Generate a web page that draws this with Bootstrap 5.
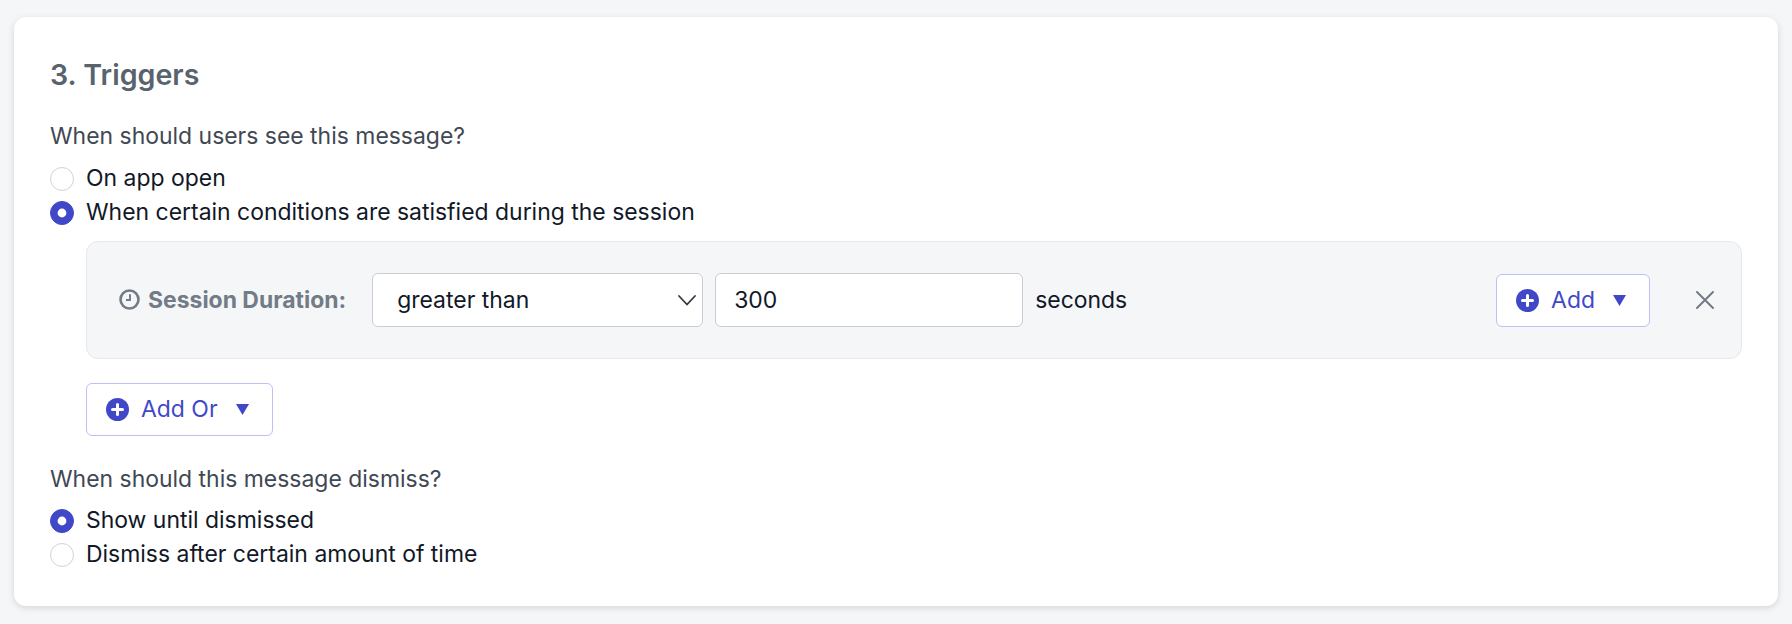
<!DOCTYPE html>
<html lang="en">
<head>
<meta charset="utf-8">
<title>Triggers</title>
<link href="https://cdn.jsdelivr.net/npm/bootstrap@5.3.0/dist/css/bootstrap.min.css" rel="stylesheet">
<style>
body{background:#f5f6f8;font-family:Inter,"Liberation Sans",sans-serif;font-size:22.95px;color:#111827;}
.page-pad{padding:17px 14px 18px;}
.trig-card{height:589px;border:0;border-radius:12px;box-shadow:0 2px 6px rgba(40,50,70,.16);padding:40px 36px 0;}
.trig-title{font-size:28.6px;font-weight:600;color:#59636e;line-height:36px;margin:0 0 30px;}
.q-label{color:#3f4853;line-height:27px;margin:0 0 15px;}
.q-label-second{margin-bottom:14px;}
.opt{min-height:0;padding-left:36px;margin:0 0 7px;line-height:27px;}
.opt .form-check-input{width:24px;height:24px;margin-left:-36px;margin-top:2px;border-color:#cfd2d8;}
.opt .form-check-input:checked{background-color:#4148c8;border-color:#4148c8;background-image:url("data:image/svg+xml,%3csvg xmlns='http://www.w3.org/2000/svg' viewBox='-4 -4 8 8'%3e%3ccircle r='1.6' fill='%23fff'/%3e%3c/svg%3e");}
.cond-panel{margin:8px 0 24px 36px;height:118px;background:#f5f6f8;border:1px solid #e6e8ec;border-radius:12px;padding:0 33px 0 32px;}
.cond-name{font-weight:700;color:#727c86;margin-right:26px;gap:8px;}
.cond-select,.cond-input{height:54px;font-size:22.95px;color:#111827;border-color:#c9cdd3;border-radius:6px;}
.cond-select{width:331px;padding-left:24px;background-image:url("data:image/svg+xml,%3csvg xmlns='http://www.w3.org/2000/svg' viewBox='0 0 18 11'%3e%3cpath fill='none' stroke='%23343a40' stroke-width='1.8' stroke-linecap='round' d='M1 1l8 8.500 8-8.500'/%3e%3c/svg%3e");background-size:18px 11px;background-position:right 6px center;}
.cond-input{width:308px;margin-left:12px;padding-left:18px;}
.cond-unit{margin-left:12px;}
.add-btn{height:53px;display:inline-flex;align-items:center;background:#fff;border:1px solid #bcc0f2;border-radius:6px;color:#4148c8;font-size:22.95px;padding:0 23px 0 19px;gap:12px;}
.add-btn:hover{background:#fff;color:#4148c8;border-color:#bcc0f2;}
.tri{margin-left:6px;}
.x-btn{margin-left:46px;line-height:0;margin-right:-6px;}
.or-wrap{margin:0 0 30px 36px;}
</style>
</head>
<body>
<div class="page-pad">
  <div class="card trig-card">
    <h2 class="trig-title">3. Triggers</h2>
    <p class="q-label">When should users see this message?</p>
    <div class="form-check opt">
      <input class="form-check-input" type="radio" name="show" id="s1">
      <label class="form-check-label" for="s1">On app open</label>
    </div>
    <div class="form-check opt">
      <input class="form-check-input" type="radio" name="show" id="s2" checked>
      <label class="form-check-label" for="s2">When certain conditions are satisfied during the session</label>
    </div>
    <div class="cond-panel d-flex align-items-center">
      <span class="cond-name d-inline-flex align-items-center">
        <svg width="21" height="21" viewBox="0 0 21 21" fill="none" stroke="#727c86" stroke-width="2.600"><circle cx="10.500" cy="10.500" r="9"/><path d="M11 5.200v5.800H7" stroke-width="1.900"/></svg>
        <span>Session Duration:</span>
      </span>
      <select class="form-select cond-select"><option>greater than</option></select>
      <input class="form-control cond-input" type="text" value="300">
      <span class="cond-unit">seconds</span>
      <button type="button" class="btn add-btn ms-auto">
        <svg width="23" height="23" viewBox="0 0 23 23"><circle cx="11.5" cy="11.5" r="11.5" fill="#4148c8"/><path d="M11.5 6.500v10M6.500 11.500h10" stroke="#fff" stroke-width="3" stroke-linecap="round"/></svg>
        <span>Add</span>
        <svg class="tri" width="13" height="11" viewBox="0 0 13 11"><path d="M0 0h13L6.500 11z" fill="#4148c8"/></svg>
      </button>
      <span class="x-btn">
        <svg width="18" height="18" viewBox="0 0 18 18" stroke="#6f7a84" stroke-width="1.900" stroke-linecap="round"><path d="M1 1l16 16M17 1L1 17"/></svg>
      </span>
    </div>
    <div class="or-wrap">
      <button type="button" class="btn add-btn">
        <svg width="23" height="23" viewBox="0 0 23 23"><circle cx="11.5" cy="11.5" r="11.5" fill="#4148c8"/><path d="M11.5 6.500v10M6.500 11.500h10" stroke="#fff" stroke-width="3" stroke-linecap="round"/></svg>
        <span>Add Or</span>
        <svg class="tri" width="13" height="11" viewBox="0 0 13 11"><path d="M0 0h13L6.500 11z" fill="#4148c8"/></svg>
      </button>
    </div>
    <p class="q-label q-label-second">When should this message dismiss?</p>
    <div class="form-check opt">
      <input class="form-check-input" type="radio" name="dis" id="d1" checked>
      <label class="form-check-label" for="d1">Show until dismissed</label>
    </div>
    <div class="form-check opt">
      <input class="form-check-input" type="radio" name="dis" id="d2">
      <label class="form-check-label" for="d2">Dismiss after certain amount of time</label>
    </div>
  </div>
</div>
<script src="https://cdn.jsdelivr.net/npm/bootstrap@5.3.0/dist/js/bootstrap.bundle.min.js"></script>
</body>
</html>
